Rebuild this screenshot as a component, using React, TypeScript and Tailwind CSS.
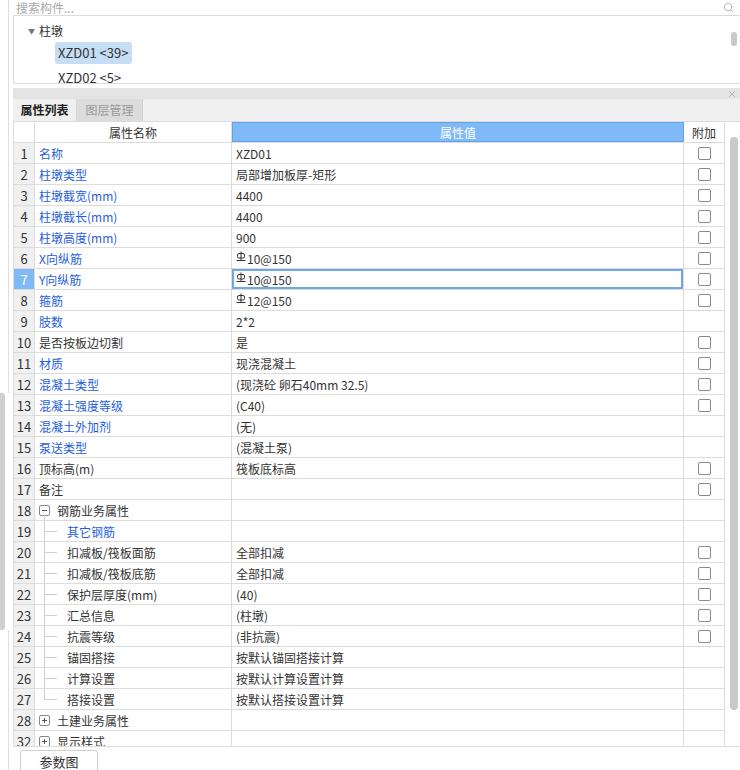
import { Search, X } from "lucide-react";

type Row = {
  n: number;
  name: string;
  value?: string;
  rebar?: boolean;
  blue?: boolean;
  cb?: boolean;
  kind?: "plain" | "child" | "minus" | "plus";
  last?: boolean;
  selected?: boolean;
};

const rows: Row[] = [
  { n: 1, name: "名称", value: "XZD01", blue: true, cb: true },
  { n: 2, name: "柱墩类型", value: "局部增加板厚-矩形", blue: true, cb: true },
  { n: 3, name: "柱墩截宽(mm)", value: "4400", blue: true, cb: true },
  { n: 4, name: "柱墩截长(mm)", value: "4400", blue: true, cb: true },
  { n: 5, name: "柱墩高度(mm)", value: "900", blue: true, cb: true },
  { n: 6, name: "X向纵筋", value: "10@150", rebar: true, blue: true, cb: true },
  { n: 7, name: "Y向纵筋", value: "10@150", rebar: true, blue: true, cb: true, selected: true },
  { n: 8, name: "箍筋", value: "12@150", rebar: true, blue: true, cb: true },
  { n: 9, name: "肢数", value: "2*2", blue: true },
  { n: 10, name: "是否按板边切割", value: "是", cb: true },
  { n: 11, name: "材质", value: "现浇混凝土", blue: true, cb: true },
  { n: 12, name: "混凝土类型", value: "(现浇砼 卵石40mm 32.5)", blue: true, cb: true },
  { n: 13, name: "混凝土强度等级", value: "(C40)", blue: true, cb: true },
  { n: 14, name: "混凝土外加剂", value: "(无)", blue: true },
  { n: 15, name: "泵送类型", value: "(混凝土泵)", blue: true },
  { n: 16, name: "顶标高(m)", value: "筏板底标高", cb: true },
  { n: 17, name: "备注", value: "", cb: true },
  { n: 18, name: "钢筋业务属性", kind: "minus" },
  { n: 19, name: "其它钢筋", kind: "child", blue: true },
  { n: 20, name: "扣减板/筏板面筋", value: "全部扣减", kind: "child", cb: true },
  { n: 21, name: "扣减板/筏板底筋", value: "全部扣减", kind: "child", cb: true },
  { n: 22, name: "保护层厚度(mm)", value: "(40)", kind: "child", cb: true },
  { n: 23, name: "汇总信息", value: "(柱墩)", kind: "child", cb: true },
  { n: 24, name: "抗震等级", value: "(非抗震)", kind: "child", cb: true },
  { n: 25, name: "锚固搭接", value: "按默认锚固搭接计算", kind: "child" },
  { n: 26, name: "计算设置", value: "按默认计算设置计算", kind: "child" },
  { n: 27, name: "搭接设置", value: "按默认搭接设置计算", kind: "child", last: true },
  { n: 28, name: "土建业务属性", kind: "plus" },
  { n: 32, name: "显示样式", kind: "plus" },
];

function RebarMark() {
  return (
    <svg width="10" height="11" viewBox="0 0 10 11" className="mr-[1px] -mt-[4px] shrink-0" fill="none" stroke="#333" strokeWidth="1">
      <path d="M5 0.5V9.5" />
      <rect x="1.5" y="2.5" width="7" height="4.5" rx="1.5" />
      <path d="M0.5 9.5H9.5" />
    </svg>
  );
}

function ToggleBox({ plus }: { plus: boolean }) {
  return (
    <span className="w-[11px] h-[11px] border border-[#888] rounded-[2px] bg-white flex items-center justify-center shrink-0">
      <svg width="7" height="7" viewBox="0 0 7 7" stroke="#555" strokeWidth="1">
        <path d="M1 3.5H6" />
        {plus && <path d="M3.5 1V6" />}
      </svg>
    </span>
  );
}

function NameCell({ r }: { r: Row }) {
  const color = r.blue ? "text-[#1f5ee0]" : "text-[#333]";
  if (r.kind === "child") {
    return (
      <div className="relative h-full border-r border-[#dcdcdc] flex items-center pl-[32px] pt-[1px]">
        <span className={`absolute left-[9px] top-0 w-px bg-[#cfcfcf] ${r.last ? "h-[10px]" : "h-full"}`} />
        <span className="absolute left-[9px] top-[10px] w-[13px] h-px bg-[#cfcfcf]" />
        <span className={color}>{r.name}</span>
      </div>
    );
  }
  if (r.kind === "minus" || r.kind === "plus") {
    return (
      <div className="relative h-full border-r border-[#dcdcdc] flex items-center pl-[4px] gap-[7px]">
        {r.kind === "minus" && <span className="absolute left-[9px] top-[15px] bottom-0 w-px bg-[#cfcfcf]" />}
        <ToggleBox plus={r.kind === "plus"} />
        <span className={`${color} pt-[1px]`}>{r.name}</span>
      </div>
    );
  }
  return (
    <div className="h-full border-r border-[#dcdcdc] flex items-center pl-[4px] pt-[1px]">
      <span className={color}>{r.name}</span>
    </div>
  );
}

function TableRow({ r }: { r: Row }) {
  return (
    <div className="grid grid-cols-[21px_197px_452px_41px] h-[21px] shrink-0 border-b border-[#dcdcdc] text-[12px] leading-none">
      <div
        className={`h-full border-r border-[#dcdcdc] flex items-center justify-center text-[13px] pt-[1px] ${
          r.selected ? "bg-[#7fbaf7] text-white" : "bg-[#f0f0f0] text-[#333]"
        }`}
      >
        {r.n}
      </div>
      <NameCell r={r} />
      <div
        className={`h-full border-r border-[#dcdcdc] flex items-center pl-[4px] pt-[1px] text-[#333] ${
          r.selected ? "ring-2 ring-inset ring-[#6fa8e8]" : ""
        }`}
      >
        {r.rebar && <RebarMark />}
        {r.value}
      </div>
      <div className="h-full border-r border-[#dcdcdc] flex items-center justify-center">
        {r.cb && <span className="w-[13px] h-[13px] border border-[#8a8a8a] rounded-[2px] bg-white" />}
      </div>
    </div>
  );
}

export default function App() {
  return (
    <div className="w-[740px] h-[770px] bg-white flex overflow-hidden font-['Noto_Sans_CJK_SC',sans-serif] text-[12px] text-[#333]">
      {/* left gutter */}
      <div className="w-[13px] shrink-0 flex flex-col">
        <div className="h-[393px] w-[9px] border-r border-[#dedede]" />
        <div className="h-[237px] w-[5px] bg-[#cfcfcf] rounded-r-[3px]" />
        <div className="flex-1 w-[9px] border-r border-[#dedede]" />
      </div>

      <div className="flex-1 flex flex-col min-w-0">
        {/* search */}
        <div className="h-[16px] shrink-0 border-b border-[#dcdcdc] flex items-center pl-[3px] pr-[6px]">
          <span className="text-[#a8a8a8] text-[12px] leading-none">搜索构件...</span>
          <Search size={11} className="ml-auto text-[#999]" strokeWidth={1.6} />
        </div>

        {/* tree */}
        <div className="h-[68px] shrink-0 border-l border-b border-[#dcdcdc] flex">
          <div className="flex-1 overflow-hidden pt-[6px]">
            <div className="h-[18px] flex items-center pl-[14px] gap-[4px]">
              <span className="text-[7px] text-[#777]">▼</span>
              <span className="text-[12px]">柱墩</span>
            </div>
            <div className="h-[23px] flex items-center pl-[41px] mt-[1px]">
              <span className="bg-[#c5ddf5] rounded-[3px] pl-[3px] h-[22px] w-[77px] flex items-center text-[13px] whitespace-nowrap">
                XZD01 &lt;39&gt;
              </span>
            </div>
            <div className="h-[23px] flex items-center pl-[44px] pt-[4px] text-[13px] whitespace-nowrap">XZD02 &lt;5&gt;</div>
          </div>
          <div className="w-[9px] shrink-0 pt-[16px]">
            <div className="w-[6px] h-[14px] rounded-[3px] bg-[#c8c8c8]" />
          </div>
        </div>

        <div className="h-[4px] shrink-0" />

        {/* panel header */}
        <div className="h-[11px] shrink-0 bg-[#e4e4e4] flex items-center justify-end pr-[3px]">
          <X size={10} className="text-[#999]" strokeWidth={1.5} />
        </div>

        {/* tabs */}
        <div className="h-[23px] shrink-0 bg-[#f0f0f0] flex items-stretch border-b border-[#dcdcdc]">
          <div className="w-[64px] flex items-center justify-center font-bold text-[12px] text-[#222] border-r border-[#d6d6d6]">
            属性列表
          </div>
          <div className="w-[66px] flex items-center justify-center text-[12px] text-[#9a9a9a] bg-[#dcdcdc] border-r border-[#cfcfcf]">
            图层管理
          </div>
        </div>

        {/* table */}
        <div className="h-[624px] shrink-0 flex overflow-hidden">
          <div className="border-l border-[#dcdcdc] flex flex-col">
            <div className="grid grid-cols-[21px_197px_452px_41px] h-[21px] shrink-0 border-b border-[#dcdcdc] text-[12px] leading-none">
              <div className="border-r border-[#dcdcdc]" />
              <div className="border-r border-[#dcdcdc] flex items-center justify-center pt-[1px]">属性名称</div>
              <div className="bg-[#7fbaf7] border border-[#5fa3ee] text-white flex items-center justify-center pt-[1px]">属性值</div>
              <div className="border-r border-[#dcdcdc] flex items-center justify-center pt-[1px]">附加</div>
            </div>
            {rows.map((r) => (
              <TableRow key={r.n} r={r} />
            ))}
          </div>
          <div className="flex-1 pl-[5px] pt-[15px]">
            <div className="w-[8px] h-[573px] rounded-[4px] bg-[#c9c9c9]" />
          </div>
        </div>

        {/* bottom tabs */}
        <div className="flex-1 border-t border-[#dcdcdc] pl-[7px] pt-[3px]">
          <div className="w-[78px] h-[24px] border border-[#cfcfcf] rounded-t-[3px] bg-white flex items-center justify-center text-[13px]">
            参数图
          </div>
        </div>
      </div>
    </div>
  );
}
